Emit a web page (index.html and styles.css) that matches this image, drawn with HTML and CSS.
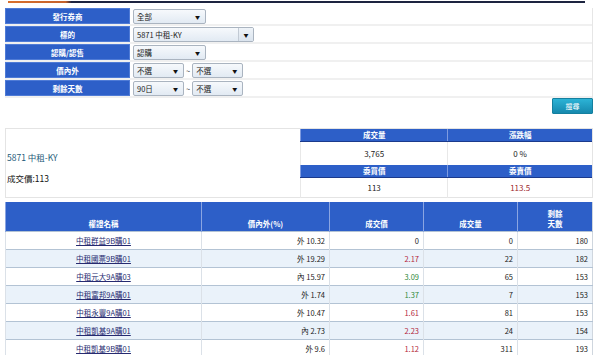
FILE: index.html
```html
<!DOCTYPE html>
<html lang="zh-Hant">
<head>
    <meta charset="UTF-8">
    <meta name="viewport" content="width=device-width, initial-scale=1.0">
    <title>權證搜尋 - 中租-KY</title>
    <link rel="stylesheet" href="styles.css">
</head>
<body>
    <div class="topline"></div>
    <div class="page">
        <div class="filter">
            <div class="frow">
                <div class="flabel">發行券商</div>
                <div class="select w-short"><span>全部</span><span class="arrow">▼</span></div>
            </div>
            <div class="frow">
                <div class="flabel">標的</div>
                <div class="select combo w-long"><span>5871 中租-KY</span><span class="arrow box">▼</span></div>
            </div>
            <div class="frow">
                <div class="flabel">認購/認售</div>
                <div class="select w-short"><span>認購</span><span class="arrow">▼</span></div>
            </div>
            <div class="frow">
                <div class="flabel">價內外</div>
                <div class="select w-half"><span>不選</span><span class="arrow">▼</span></div>
                <span class="tilde">~</span>
                <div class="select w-half"><span>不選</span><span class="arrow">▼</span></div>
            </div>
            <div class="frow">
                <div class="flabel">剩餘天數</div>
                <div class="select w-half"><span>90日</span><span class="arrow">▼</span></div>
                <span class="tilde">~</span>
                <div class="select w-half"><span>不選</span><span class="arrow">▼</span></div>
            </div>
        </div>

        <div class="actions">
            <button class="btn-search">搜尋</button>
        </div>

        <div class="quote">
            <div class="quote-name">
                <div class="stock">5871 中租-KY</div>
                <div class="last">成交價:113</div>
            </div>
            <table class="quote-table">
                <tr class="qhead"><th>成交量</th><th>漲跌幅</th></tr>
                <tr class="qval1"><td>3,765</td><td>0 %</td></tr>
                <tr class="qhead"><th>委買價</th><th>委賣價</th></tr>
                <tr class="qval2"><td>113</td><td class="ask">113.5</td></tr>
            </table>
        </div>

        <table class="warrants">
            <colgroup>
                <col class="c-name">
                <col class="c-money">
                <col class="c-price">
                <col class="c-vol">
                <col class="c-days">
            </colgroup>
            <thead>
                <tr>
                    <th>權證名稱</th>
                    <th>價內外(%)</th>
                    <th>成交價</th>
                    <th>成交量</th>
                    <th>剩餘<br>天數</th>
                </tr>
            </thead>
            <tbody>
                <tr>
                    <td class="name"><a href="#">中租群益9B購01</a></td>
                    <td>外 10.32</td>
                    <td>0</td>
                    <td>0</td>
                    <td>180</td>
                </tr>
                <tr>
                    <td class="name"><a href="#">中租國票9B購01</a></td>
                    <td>外 19.29</td>
                    <td class="up">2.17</td>
                    <td>22</td>
                    <td>182</td>
                </tr>
                <tr>
                    <td class="name"><a href="#">中租元大9A購03</a></td>
                    <td>內 15.97</td>
                    <td class="down">3.09</td>
                    <td>65</td>
                    <td>153</td>
                </tr>
                <tr>
                    <td class="name"><a href="#">中租富邦9A購01</a></td>
                    <td>外 1.74</td>
                    <td class="down">1.37</td>
                    <td>7</td>
                    <td>153</td>
                </tr>
                <tr>
                    <td class="name"><a href="#">中租永豐9A購01</a></td>
                    <td>外 10.47</td>
                    <td class="up">1.61</td>
                    <td>81</td>
                    <td>153</td>
                </tr>
                <tr>
                    <td class="name"><a href="#">中租凱基9A購01</a></td>
                    <td>內 2.73</td>
                    <td class="up">2.23</td>
                    <td>24</td>
                    <td>154</td>
                </tr>
                <tr>
                    <td class="name"><a href="#">中租凱基9B購01</a></td>
                    <td>外 9.6</td>
                    <td class="up">1.12</td>
                    <td>311</td>
                    <td>193</td>
                </tr>
            </tbody>
        </table>
    </div>
</body>
</html>
```

FILE: styles.css
```css
* {
    box-sizing: border-box;
}
body {
    margin: 0;
    font-family: "Noto Sans CJK TC", "Noto Sans", sans-serif;
    font-size: 7.5px;
    color: #222;
    background: #fff;
    overflow: hidden;
}
.topline {
    height: 2px;
    margin: 1px 15px 0 8px;
    background: linear-gradient(to right, #d9702e 0, #c4622c 10%, #1d2440 11%, #1d2440 100%);
}
.page {
    padding: 0 7px 0 5px;
}

/* filter form */
.filter {
    margin-top: 5px;
    border-right: 1px solid #e6e6e6;
}
.frow {
    display: flex;
    align-items: center;
    height: 18px;
    border-bottom: 2px solid #f0f0f0;
}
.flabel {
    width: 125px;
    height: 16px;
    line-height: 16px;
    background-color: #2d5fc8;
    border: 1px solid #4f7bd6;
    color: #fff;
    font-weight: bold;
    text-align: center;
}
.select {
    display: flex;
    align-items: center;
    justify-content: space-between;
    height: 15px;
    margin-left: 3px;
    padding-left: 3px;
    border: 1px solid #aab4c0;
    border-radius: 2px;
    background: linear-gradient(#f6f9fc, #e2eaf3);
    color: #222;
}
.arrow {
    font-size: 5px;
    padding-right: 5px;
    color: #111;
}
.arrow.box {
    display: flex;
    align-items: center;
    justify-content: center;
    width: 15px;
    height: 100%;
    padding: 0;
    border-left: 1px solid #c2cad4;
    background: linear-gradient(#eef3f8, #dbe4ee);
}
.w-short { width: 73px; }
.w-long { width: 121px; }
.w-half { width: 51px; }
.tilde {
    margin: 0 2px;
    color: #333;
}
.select + .tilde + .select {
    margin-left: 0;
}

/* search button */
.actions {
    display: flex;
    justify-content: flex-end;
    height: 16px;
}
.btn-search {
    width: 41px;
    height: 16px;
    padding: 0;
    border: 1px solid #14809f;
    border-radius: 1px;
    background: linear-gradient(#2cb3d6, #1689ae);
    color: #fff;
    font-family: inherit;
    font-size: 7px;
    cursor: pointer;
}

/* quote box */
.quote {
    display: flex;
    height: 70px;
    margin-top: 14px;
    border: 1px solid #e4e4e4;
}
.quote-name {
    width: 294px;
    padding: 22px 0 0 1px;
    font-size: 8.5px;
}
.stock {
    color: #1d5a78;
}
.last {
    margin-top: 9px;
    color: #111;
}
.quote-table {
    flex: 1;
    border-collapse: collapse;
    table-layout: fixed;
}
.quote-table th {
    height: 12px;
    padding: 0;
    background-color: #2d5fc8;
    border-bottom: 1px solid #1b3a8c;
    border-left: 1px solid #7e9be0;
    color: #fff;
    font-weight: bold;
    line-height: 10px;
}
.quote-table td {
    padding: 0;
    text-align: center;
    font-size: 8px;
    border-left: 1px solid #e8e8e8;
}
.qval1 td {
    height: 24px;
}
.qval2 td {
    height: 21px;
}
.quote-table .ask {
    color: #9e1f2e;
}

/* warrant list */
.warrants {
    width: 100%;
    margin-top: 4px;
    border-collapse: collapse;
    table-layout: fixed;
    border-left: 1px solid #cfd6de;
    border-right: 1px solid #cfd6de;
}
.c-name { width: 196px; }
.c-money { width: 128px; }
.c-price { width: 94px; }
.c-vol { width: 94px; }
.warrants th {
    height: 29px;
    padding: 0 0 2px;
    vertical-align: bottom;
    background-color: #2d5fc8;
    border-left: 1px solid #8aa5e2;
    color: #fff;
    font-weight: bold;
    line-height: 10px;
}
.warrants td {
    height: 18px;
    padding: 0 4px 0 0;
    text-align: right;
    border-top: 1px solid #b3c3d4;
    border-left: 1px solid #dbe1e8;
    color: #222;
}
.warrants tbody tr:nth-child(even) td {
    background-color: #eaf2fa;
}
.warrants td.name {
    padding: 0;
    text-align: center;
}
.warrants a {
    color: #262a70;
    text-decoration: underline;
}
.warrants .up {
    color: #b3263a;
}
.warrants .down {
    color: #2f8a3a;
}
```
